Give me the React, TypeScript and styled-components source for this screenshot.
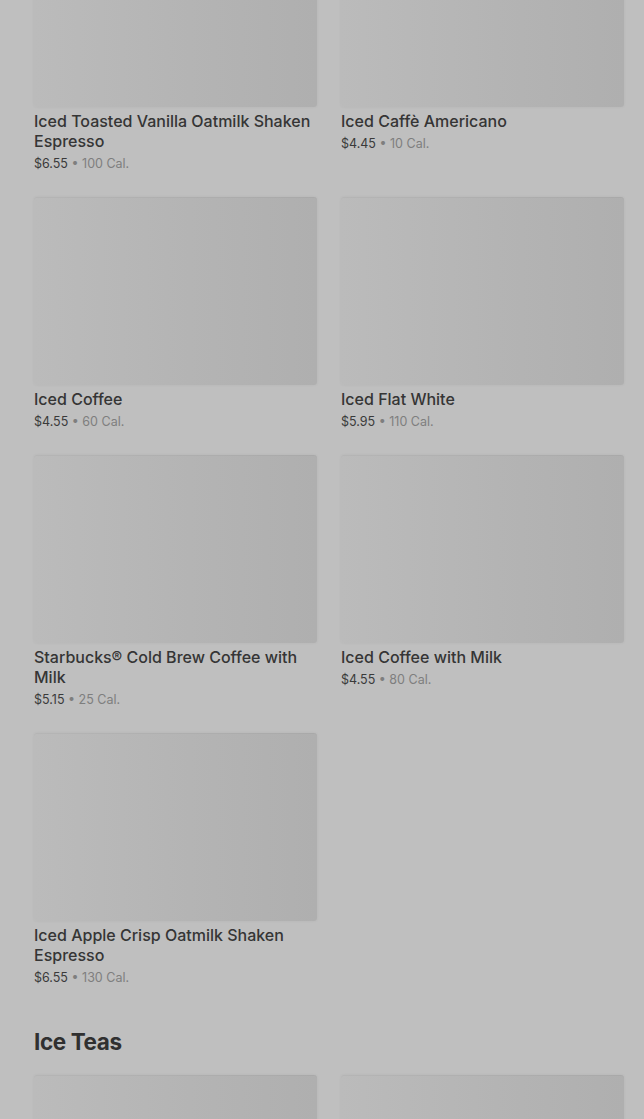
import React from 'react';
import styled, { createGlobalStyle } from 'styled-components';

type Product = {
  name: string;
  price: string;
  calories: number;
};

const icedCoffees: Product[] = [
  { name: 'Iced Toasted Vanilla Oatmilk Shaken Espresso', price: '$6.55', calories: 100 },
  { name: 'Iced Caffè Americano', price: '$4.45', calories: 10 },
  { name: 'Iced Coffee', price: '$4.55', calories: 60 },
  { name: 'Iced Flat White', price: '$5.95', calories: 110 },
  { name: 'Starbucks® Cold Brew Coffee with Milk', price: '$5.15', calories: 25 },
  { name: 'Iced Coffee with Milk', price: '$4.55', calories: 80 },
  { name: 'Iced Apple Crisp Oatmilk Shaken Espresso', price: '$6.55', calories: 130 },
];

const iceTeas: Product[] = [
  { name: 'Iced Black Tea', price: '$3.95', calories: 0 },
  { name: 'Iced Green Tea', price: '$3.95', calories: 0 },
];

function ProductCard({ product }: { product: Product }) {
  return (
    <Card>
      <ProductImage />
      <ProductName>{product.name}</ProductName>
      <ProductMeta>
        {product.price}
        <Calories> • {product.calories} Cal.</Calories>
      </ProductMeta>
    </Card>
  );
}

export default function App() {
  return (
    <>
      <GlobalStyle />
      <Page>
        <Menu>
          <Grid>
            {icedCoffees.map((p) => (
              <ProductCard key={p.name} product={p} />
            ))}
          </Grid>
          <SectionTitle>Ice Teas</SectionTitle>
          <Grid>
            {iceTeas.map((p) => (
              <ProductCard key={p.name} product={p} />
            ))}
          </Grid>
        </Menu>
      </Page>
    </>
  );
}

const GlobalStyle = createGlobalStyle`
  html, body {
    margin: 0;
    padding: 0;
    background: #bfbfbf;
    overflow: hidden;
  }
  body {
    font-family: Inter, "Noto Sans", sans-serif;
    color: #363636;
  }
`;

const Page = styled.div`
  height: 1119px;
  overflow: hidden;
  background: #bfbfbf;
`;

// page is scrolled: first row of images sits partly above the fold
const Menu = styled.div`
  margin-top: -81px;
  padding: 0 20px 0 34px;
`;

const Grid = styled.div`
  display: grid;
  grid-template-columns: 283px 283px;
  column-gap: 24px;
  row-gap: 23px;
`;

const Card = styled.div`
  display: flex;
  flex-direction: column;
`;

const ProductImage = styled.div`
  height: 188px;
  border-radius: 3px;
  background: linear-gradient(90deg, #bbbbbb 0%, #b4b4b4 55%, #afafaf 100%);
  box-shadow: 0 0 3px rgba(0, 0, 0, 0.06), inset 0 1px 0 rgba(0, 0, 0, 0.03);
  margin-bottom: 4px;
`;

const ProductName = styled.div`
  font-size: 16px;
  font-weight: 500;
  line-height: 20px;
  color: #353535;
`;

const ProductMeta = styled.div`
  margin-top: 3px;
  font-size: 12.5px;
  line-height: 20px;
  color: #3a3a3a;
`;

const Calories = styled.span`
  color: #7e7e7e;
`;

const SectionTitle = styled.h2`
  margin: 37px 0 16px;
  font-size: 22.5px;
  font-weight: 700;
  line-height: 34px;
  letter-spacing: -0.4px;
  color: #303030;
`;
